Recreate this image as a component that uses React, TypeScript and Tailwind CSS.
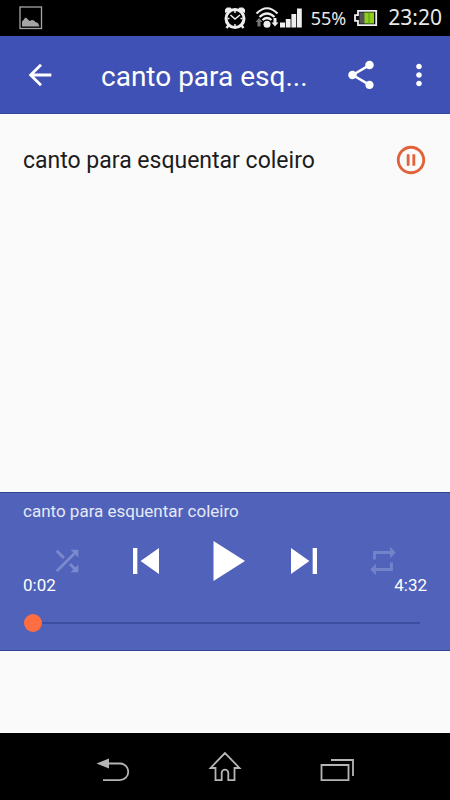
import { useState } from "react";

const TRACK = "canto para esquentar coleiro";

// app bar titles are cut to a fixed number of characters
const shorten = (text: string, max = 14) => (text.length > max ? text.slice(0, max) + "..." : text);

function MaterialIcon({ d, className }: { d: string; className: string }) {
  return (
    <svg viewBox="0 0 24 24" fill="currentColor" className={className} aria-hidden="true">
      <path d={d} />
    </svg>
  );
}

const paths = {
  back: "M20 11H7.83l5.59-5.59L12 4l-8 8 8 8 1.41-1.41L7.83 13H20v-2z",
  share:
    "M18 16.08c-.76 0-1.44.3-1.96.77L8.91 12.7c.05-.23.09-.46.09-.7s-.04-.47-.09-.7l7.05-4.11c.54.5 1.25.81 2.04.81 1.66 0 3-1.34 3-3s-1.34-3-3-3-3 1.34-3 3c0 .24.04.47.09.7L8.04 9.81C7.5 9.31 6.79 9 6 9c-1.66 0-3 1.34-3 3s1.34 3 3 3c.79 0 1.5-.31 2.04-.81l7.12 4.16c-.05.21-.08.43-.08.65 0 1.61 1.31 2.92 2.92 2.92s2.92-1.31 2.92-2.92-1.31-2.92-2.92-2.92z",
  more: "M12 8c1.1 0 2-.9 2-2s-.9-2-2-2-2 .9-2 2 .9 2 2 2zm0 2c-1.1 0-2 .9-2 2s.9 2 2 2 2-.9 2-2-.9-2-2-2zm0 6c-1.1 0-2 .9-2 2s.9 2 2 2 2-.9 2-2-.9-2-2-2z",
  pause:
    "M9 16h2V8H9v8zm3-14C6.48 2 2 6.48 2 12s4.48 10 10 10 10-4.48 10-10S17.52 2 12 2zm0 18c-4.41 0-8-3.59-8-8s3.59-8 8-8 8 3.59 8 8-3.59 8-8 8zm1-4h2V8h-2v8z",
  shuffle:
    "M10.59 9.17L5.41 4 4 5.41l5.17 5.17 1.42-1.41zM14.5 4l2.04 2.04L4 18.59 5.41 20 17.96 7.46 20 9.5V4h-5.5zm.33 9.41l-1.41 1.41 3.13 3.13L14.5 20H20v-5.5l-2.04 2.04-3.13-3.13z",
  repeat: "M7 7h10v3l4-4-4-4v3H5v6h2V7zm10 10H7v-3l-4 4 4 4v-3h12v-6h-2v4z",
  previous: "M6 6h2v12H6zm3.5 6l8.5 6V6z",
  next: "M6 18l8.5-6L6 6v12zM16 6v12h2V6h-2z",
};

function StatusBar() {
  return (
    <div className="flex h-9 items-center bg-black pl-[19px] pr-2 text-[#e8e8e8] font-['Noto_Sans',sans-serif]">
      <svg viewBox="0 0 24 24" className="size-6" aria-hidden="true">
        <rect x="1" y="1" width="21.5" height="21.5" fill="none" stroke="#a5a5a5" strokeWidth="1.3" />
        <path d="M3 20.5v-5l1.5-1.5 1-1.5 1.5-1 1.5 1.5 2 2 2.5-1 2 .5 1.5 1.5 2.5 1 1.5 3.5z" fill="#a5a5a5" />
      </svg>
      <div className="ml-auto flex items-center">
        <svg viewBox="0 0 24 24" className="size-6" aria-hidden="true">
          <path d="M2 7V3.5L4 1.500h3.500L9 3.500zM22 7V3.500l-2-2h-3.500L15 3.500z" fill="#eee" />
          <circle cx="12" cy="12.500" r="9" fill="none" stroke="#eee" strokeWidth="3" />
          <path d="M7.500 9l4.500 4 5-4M12 5v2M12 18v2M4.500 12.500h2M17.500 12.500h2" fill="none" stroke="#eee" strokeWidth="1.500" />
          <path d="M5.500 19.500l-2 2.500M18.500 19.500l2 2.500" stroke="#eee" strokeWidth="2.500" />
        </svg>
        <svg viewBox="0 0 24 24" className="ml-2 size-6" aria-hidden="true">
          <path d="M1.500 7.500Q12-3 22.500 7.500M4.500 11q7.500-7 15 0M7.500 14q4.500-4 9 0" fill="none" stroke="#eee" strokeWidth="2.200" />
          <circle cx="12" cy="18.300" r="3.500" fill="#eee" />
          <path d="M4 12l3.500 4H5.500v4.500h-3V16h-2z" fill="#777" />
          <path d="M20 20.500l-3.500-4h2V12h3v4.500h2z" fill="#eee" />
        </svg>
        <svg viewBox="0 0 24 24" className="size-6" fill="#eee" aria-hidden="true">
          <path d="M1 16.500h5v5H1zM6.800 13h4.800v8.500H6.800zM12.400 8h4.800v13.500h-4.800zM18 2.500h4.800v19H18z" />
        </svg>
        <span className="ml-2 text-lg">55%</span>
        <svg viewBox="0 0 24 18" className="ml-2 h-[18px] w-6" aria-hidden="true">
          <path d="M4 1.800h18.200v14.400H4v-4.400H1V6.200h3z" fill="#111" stroke="#eee" strokeWidth="1.800" />
          <rect x="5.500" y="3.500" width="5.500" height="11" fill="#555" />
          <rect x="10.500" y="3.500" width="9.500" height="11" fill="#8cd01c" />
          <rect x="14.500" y="3.500" width="1" height="11" fill="#5d9a10" />
        </svg>
        <span className="ml-2.5 text-[21px]">23:20</span>
      </div>
    </div>
  );
}

function AppBar() {
  return (
    <header className="flex h-[78px] items-center border-b border-[#34459c] bg-[#3f51b5] pl-[23px] pr-3.5 text-white">
      <button aria-label="Voltar">
        <MaterialIcon d={paths.back} className="size-[34px]" />
      </button>
      <h1 className="ml-11 flex-1 whitespace-nowrap pt-1 text-[28px]">{shorten(TRACK)}</h1>
      <button aria-label="Compartilhar">
        <MaterialIcon d={paths.share} className="size-[34px]" />
      </button>
      <button className="ml-6" aria-label="Mais opções">
        <MaterialIcon d={paths.more} className="size-[34px]" />
      </button>
    </header>
  );
}

function Player() {
  const [shuffle, setShuffle] = useState(false);
  const [repeat, setRepeat] = useState(false);

  return (
    <section className="border-y border-[#34438f] bg-[#5062b9] text-white">
      <p className="px-[23px] pt-1.5 text-[17px] leading-6 text-[#e6e9f7]">{TRACK}</p>
      <div className="mt-3 grid h-12 grid-cols-5 place-items-center px-7">
        <button aria-label="Aleatório" aria-pressed={shuffle} onClick={() => setShuffle(!shuffle)}>
          <MaterialIcon d={paths.shuffle} className={shuffle ? "size-[34px]" : "size-[34px] text-[#7b89cd]"} />
        </button>
        <button aria-label="Anterior">
          <MaterialIcon d={paths.previous} className="size-[52px]" />
        </button>
        <button aria-label="Tocar">
          <svg viewBox="0 0 48 48" fill="currentColor" className="size-12" aria-hidden="true">
            <path d="M12.500 4v40L44 24z" />
          </svg>
        </button>
        <button aria-label="Próxima">
          <MaterialIcon d={paths.next} className="size-[52px]" />
        </button>
        <button aria-label="Repetir" aria-pressed={repeat} onClick={() => setRepeat(!repeat)}>
          <MaterialIcon d={paths.repeat} className={repeat ? "size-[34px]" : "size-[34px] text-[#7383ca]"} />
        </button>
      </div>
      <div className="-mt-2.5 flex justify-between px-[23px] text-[17px] leading-6">
        <span>0:02</span>
        <span>4:32</span>
      </div>
      <div className="flex pb-[18px] pl-6 pr-[30px] pt-[17px]">
        <input
          type="range"
          min={0}
          max={272}
          step={4}
          defaultValue={0}
          aria-label="Posição"
          className="h-[18px] w-full appearance-none bg-transparent [&::-webkit-slider-runnable-track]:h-0.5 [&::-webkit-slider-runnable-track]:bg-[#3d4d9f] [&::-webkit-slider-thumb]:-mt-2 [&::-webkit-slider-thumb]:size-[18px] [&::-webkit-slider-thumb]:appearance-none [&::-webkit-slider-thumb]:rounded-full [&::-webkit-slider-thumb]:bg-[#ff6e40]"
        />
      </div>
    </section>
  );
}

function NavBar() {
  return (
    <nav className="flex h-[67px] items-center justify-center gap-[76px] bg-black pt-0.5 text-[#b5b5b5]">
      <button aria-label="Voltar">
        <svg viewBox="0 0 36 36" className="size-9" fill="none" stroke="currentColor" strokeWidth="1.800" aria-hidden="true">
          <path d="M13 13.500h12a8.300 8.300 0 0 1 0 16.600H8" />
          <path d="M1.500 13.500L14 8.500v10z" fill="currentColor" stroke="none" />
        </svg>
      </button>
      <button aria-label="Início">
        <svg viewBox="0 0 36 36" className="size-9" fill="none" stroke="currentColor" strokeWidth="1.800" aria-hidden="true">
          <path d="M18 3L3.500 18h5v12.200h6.200V23a3.300 3.300 0 0 1 6.600 0v7.200h6.200V18h5z" />
        </svg>
      </button>
      <button aria-label="Recentes">
        <svg viewBox="0 0 36 36" className="size-9" fill="none" stroke="currentColor" strokeWidth="1.800" aria-hidden="true">
          <path d="M2.500 15h27v15.200h-27z" />
          <path d="M12 10h22v16" />
        </svg>
      </button>
    </nav>
  );
}

export default function App() {
  return (
    <div className="flex min-h-screen flex-col bg-[#fafafa] font-[Roboto,sans-serif]">
      <StatusBar />
      <AppBar />
      <main className="flex-1">
        <ul>
          <li className="flex items-center justify-between py-7 pl-[23px] pr-[22px]">
            <span className="pt-0.5 text-[23px] text-[#1c1c1c]">{TRACK}</span>
            <button className="text-[#e0623a]" aria-label="Pausar">
              <MaterialIcon d={paths.pause} className="size-[34px]" />
            </button>
          </li>
        </ul>
      </main>
      <Player />
      <div className="h-[82px]" />
      <NavBar />
    </div>
  );
}
